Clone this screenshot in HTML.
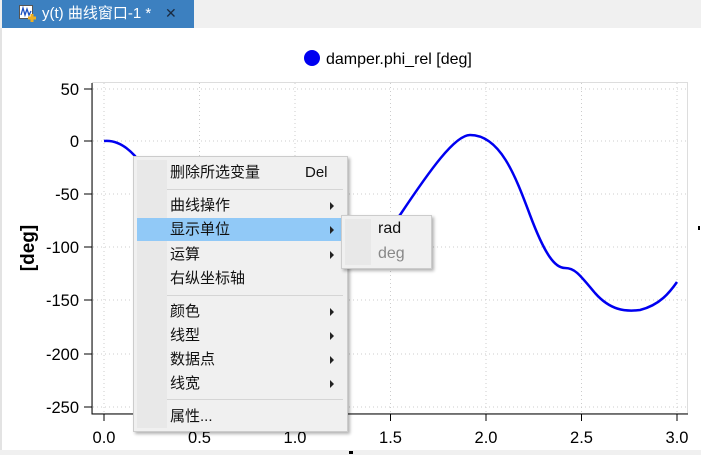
<!DOCTYPE html><html><head><meta charset="utf-8"><style>
body{margin:0;width:701px;height:455px;background:#fff;position:relative;overflow:hidden;font-family:"Liberation Sans","Noto Sans CJK SC",sans-serif}
.top{position:absolute;left:0;top:0;width:701px;height:28px;background:#f0f0f0}
.tab{position:absolute;left:2px;top:0;width:192px;height:28px;background:#3c80c0;color:#fff;font-size:15px;line-height:28px}
.m{position:absolute;left:133px;top:156px;width:213px;height:274px;background:#f0f0f0;border:1px solid #ccc;box-shadow:2px 2px 3px rgba(0,0,0,.3);font-size:15px;color:#111}
.m .ic{position:absolute;left:3px;top:3px;width:30px;bottom:3px;background:#e8e8e8}
.m div.r{position:absolute;left:36px;height:20px;line-height:20px}
.m .ar{position:absolute;left:196px;width:0;height:0;border-left:4px solid #222;border-top:4px solid transparent;border-bottom:4px solid transparent}
.m .sep{position:absolute;left:33px;right:4px;height:1px;background:#d5d5d5}
</style></head><body>
<div class="top"></div>
<div class="tab"><svg style="position:absolute;left:17px;top:5px" width="18" height="18"><rect x="0.5" y="0.5" width="13" height="13" fill="#fff" stroke="#555"/><path d="M2 10 L4 3 L6 10 L8 4 L10 10 L12 6" stroke="#1a4fc0" fill="none" stroke-width="1.3"/><path d="M13 9v8M9 13h8" stroke="#f0b020" stroke-width="3"/></svg><span style="position:absolute;left:40px;top:0">y(t) 曲线窗口-1 *</span><span style="position:absolute;left:163px;top:-1px;color:#1a2a40;font-size:14px">✕</span></div>
<div style="position:absolute;left:0;top:28px;width:2px;height:427px;background:#e3e3e3"></div>
<div style="position:absolute;left:0;top:450px;width:701px;height:5px;background:#f0f0f0"></div>
<svg style="position:absolute;left:0;top:0" width="701" height="455" font-family="Liberation Sans" font-size="16.5">
<rect x="92.5" y="82.5" width="595" height="331" fill="none" stroke="#ddd"/>
<g stroke="#ccc" stroke-dasharray="1,3">
<path d="M104 83V413M199.5 83V413M295 83V413M390.5 83V413M486 83V413M581.5 83V413M677 83V413"/>
<path d="M93 89H687M93 141H687M93 194H687M93 247H687M93 300H687M93 354H687M93 407H687"/>
</g>
<path d="M92 83V414H688" stroke="#000" fill="none"/>
<g stroke="#000"><path d="M84 89H92M84 141H92M84 194H92M84 247H92M84 300H92M84 354H92M84 407H92"/>
<path d="M104 414v7M199.5 414v7M295 414v7M390.5 414v7M486 414v7M581.5 414v7M677 414v7"/></g>
<g text-anchor="end"><text x="79" y="95">50</text><text x="79" y="147">0</text><text x="79" y="200">-50</text><text x="79" y="253">-100</text><text x="79" y="306">-150</text><text x="79" y="360">-200</text><text x="79" y="413">-250</text></g>
<g text-anchor="middle"><text x="104" y="443">0.0</text><text x="199.5" y="443">0.5</text><text x="295" y="443">1.0</text><text x="390.5" y="443">1.5</text><text x="486" y="443">2.0</text><text x="581.5" y="443">2.5</text><text x="677" y="443">3.0</text></g>
<text transform="translate(34,248) rotate(-90)" text-anchor="middle" font-weight="bold" font-size="19">[deg]</text>
<path d="M104 141 C115 140 125 145 135 156 C170 200 200 330 260 330 C310 330 330 285 360 250 C380 235 390 225 400 215 C430 170 455 135 470 135 C500 135 515 175 530 215 C545 255 555 268 565 268 C575 268 580 275 595 293 C610 310 625 312 640 310 C660 305 670 292 677 282" stroke="#0000f0" stroke-width="2.5" fill="none"/>
<circle cx="312" cy="58" r="8" fill="#0000f0"/>
<text x="326" y="64" font-size="16">damper.phi_rel [deg]</text>
<rect x="698" y="226" width="2" height="4" fill="#000"/><rect x="349" y="451" width="4" height="3" fill="#000"/>
</svg>
<div class="m"><div class="ic"></div>
<div style="position:absolute;left:3px;top:61px;width:204px;height:23px;background:#91c9f7"></div>
<div class="r" style="top:6px">删除所选变量</div><div class="r" style="top:6px;left:171px">Del</div>
<div class="sep" style="top:32px"></div>
<div class="r" style="top:39px">曲线操作</div><div class="ar" style="top:45px"></div>
<div class="r" style="top:63px">显示单位</div><div class="ar" style="top:69px"></div>
<div class="r" style="top:88px">运算</div><div class="ar" style="top:94px"></div>
<div class="r" style="top:112px">右纵坐标轴</div>
<div class="sep" style="top:138px"></div>
<div class="r" style="top:145px">颜色</div><div class="ar" style="top:151px"></div>
<div class="r" style="top:169px">线型</div><div class="ar" style="top:175px"></div>
<div class="r" style="top:193px">数据点</div><div class="ar" style="top:199px"></div>
<div class="r" style="top:217px">线宽</div><div class="ar" style="top:223px"></div>
<div class="sep" style="top:242px"></div>
<div class="r" style="top:250px">属性...</div>
</div>
<div style="position:absolute;left:341px;top:215px;width:89px;height:52px;background:#f0f0f0;border:1px solid #ccc;box-shadow:2px 2px 3px rgba(0,0,0,.3);font-size:16px">
<div style="position:absolute;left:3px;top:3px;width:26px;height:46px;background:#e8e8e8"></div>
<div style="position:absolute;left:36px;top:4px;color:#111">rad</div>
<div style="position:absolute;left:36px;top:29px;color:#888">deg</div></div>
</body></html>
